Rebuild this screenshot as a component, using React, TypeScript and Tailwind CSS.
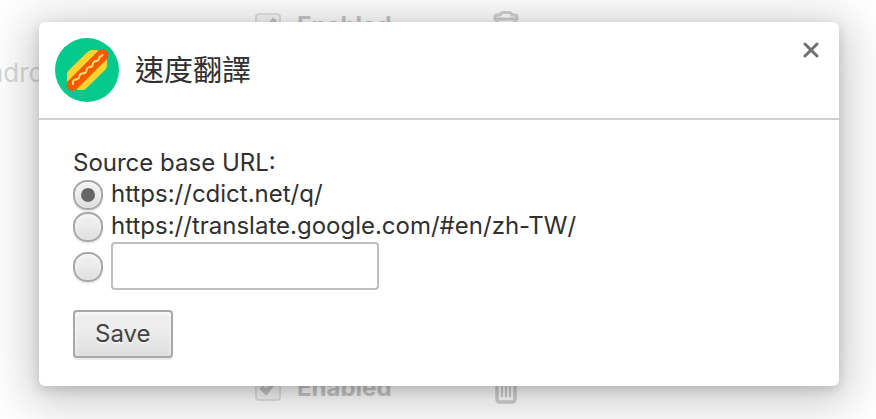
import { useState } from "react";

const radioClass =
  "mt-[2px] grid size-[30px] shrink-0 appearance-none place-items-center rounded-[14px] border-2 border-[#a8a8a8] bg-linear-to-b from-[#ededed] from-38% to-[#dedede] shadow-[0_2px_0_rgba(0,0,0,0.08),inset_0_2px_4px_rgba(255,255,255,0.75)] before:size-[14px] before:rounded-full checked:before:bg-[#666]";

function HotDogIcon() {
  return (
    <svg viewBox="0 0 64 64" className="size-16 shrink-0" aria-hidden="true">
      <circle cx="32" cy="32" r="32" fill="#04c98c" />
      <path
        d="M12 43V36Q12 34 14 32L33 13.500Q35 12 37 12H42L52 22V28Q52 30 50 32L31 50.500Q29.500 52 27 52H22Z"
        fill="#ffd42e"
      />
      <path d="M17.500 47L47.500 17" stroke="#f95a00" strokeWidth="12" strokeLinecap="round" />
      <path
        d="M18 46C17 41 20 42 22.500 41C26 39.500 23 36 27 35.500C30 35.200 31 35 31.500 32.500C32 29 33 29.500 35.500 29C39 28.500 36.500 24.500 39.500 23.500C42 22.500 43.500 23.500 44 20.500C44.500 18 46 18.500 47.500 17"
        fill="none"
        stroke="#ffe27a"
        strokeWidth="1.900"
        strokeLinecap="round"
      />
    </svg>
  );
}

function TrashIcon() {
  return (
    <svg viewBox="0 0 26 32" className="h-8 w-[26px]" fill="none" stroke="#d0d0d0" aria-hidden="true">
      <path d="M2 9V7Q2 5 4 5H7Q8 2.500 10 2.500H16Q18 2.500 19 5H22Q24 5 24 7V9Z" strokeWidth="3" />
      <path d="M4 11V27Q4 30 7 30H19Q22 30 22 27V11" strokeWidth="3.500" />
      <path d="M9 14V25M13 14V25M17 14V25" strokeWidth="2" />
    </svg>
  );
}

function ExtensionRow() {
  return (
    <div className="flex h-8 items-center">
      <label className="flex items-center gap-4 text-2xl font-bold text-[#c8c8c8]">
        <span className="grid">
          <input
            type="checkbox"
            defaultChecked
            className="col-start-1 row-start-1 size-[26px] appearance-none rounded-sm border-2 border-[#e2e2e2] bg-[#f8f8f8]"
          />
          <svg viewBox="0 0 26 26" className="pointer-events-none col-start-1 row-start-1 size-[26px]" fill="none" aria-hidden="true">
            <path d="M6 12L11 17L20 6" stroke="#c6c6c6" strokeWidth="5" />
          </svg>
        </span>
        <span className="w-[196px]">Enabled</span>
      </label>
      <button type="button" aria-label="Remove extension" className="flex">
        <TrashIcon />
      </button>
    </div>
  );
}

export default function App() {
  const [source, setSource] = useState("cdict");
  const [custom, setCustom] = useState("");

  return (
    <div className="relative min-h-screen overflow-hidden bg-white font-[Inter,'Noto_Sans_CJK_TC',sans-serif] text-2xl text-[#303030]">
      <div className="absolute inset-0 flex flex-col pt-[10px]" inert>
        <div className="pl-[255px]">
          <ExtensionRow />
        </div>
        <div className="-ml-[30px] mt-[15px] h-8 text-[26px] leading-8 text-[#d8d8d8]">Android</div>
        <div className="mt-[283px] pl-[255px]">
          <ExtensionRow />
        </div>
      </div>

      <div className="relative pt-[22px] pr-[37px] pb-[33px] pl-[39px]">
        <section
          role="dialog"
          aria-labelledby="dialog-title"
          className="rounded-md bg-white shadow-[0_8px_46px_10px_rgba(0,0,0,0.2),0_4px_12px_rgba(0,0,0,0.15)]"
        >
          <header className="flex items-center gap-4 border-b-2 border-[#d0d0d0] p-4">
            <HotDogIcon />
            <h1 id="dialog-title" className="grow pb-1 font-['Noto_Sans_CJK_TC',sans-serif] text-[29px] leading-10">
              速度翻譯
            </h1>
            <button type="button" aria-label="Close" className="self-start pr-1">
              <svg viewBox="0 0 16 16" className="mt-1 size-4" stroke="#707070" strokeWidth="3" strokeLinecap="round" aria-hidden="true">
                <path d="M2 2L14 14M14 2L2 14" />
              </svg>
            </button>
          </header>

          <form className="px-[34px] pt-7 pb-7" onSubmit={(e) => e.preventDefault()}>
            <fieldset>
              <legend className="leading-[30px]">Source base URL:</legend>
              <label className="flex h-8 items-center gap-2">
                <input type="radio" name="source" className={radioClass} checked={source === "cdict"} onChange={() => setSource("cdict")} />
                https://cdict.net/q/
              </label>
              <label className="flex h-8 items-center gap-2">
                <input type="radio" name="source" className={radioClass} checked={source === "google"} onChange={() => setSource("google")} />
                https://translate.google.com/#en/zh-TW/
              </label>
              <div className="flex items-center gap-2">
                <input
                  type="radio"
                  name="source"
                  aria-label="Custom URL"
                  className={radioClass}
                  checked={source === "custom"}
                  onChange={() => setSource("custom")}
                />
                <input
                  type="text"
                  aria-label="Custom base URL"
                  value={custom}
                  onChange={(e) => setCustom(e.target.value)}
                  className="h-12 w-[268px] rounded-sm border-2 border-[#bfbfbf] px-2"
                />
              </div>
            </fieldset>
            <button
              type="submit"
              className="mt-5 block h-12 rounded-sm border-2 border-[#a8a8a8] bg-linear-to-b from-[#ededed] from-38% to-[#dedede] px-5 text-[#444] shadow-[0_2px_0_rgba(0,0,0,0.08),inset_0_2px_4px_rgba(255,255,255,0.75)] text-shadow-[0_2px_0_#f0f0f0]"
            >
              Save
            </button>
          </form>
        </section>
      </div>
    </div>
  );
}
